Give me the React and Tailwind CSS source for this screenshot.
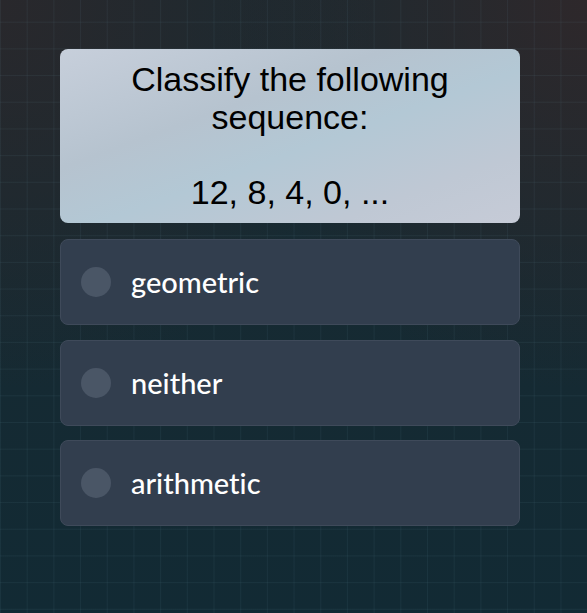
import React from 'react';

const options = ['geometric', 'neither', 'arithmetic'];

const App = () => {
  return (
    <div className="relative min-h-[613px] w-full overflow-hidden bg-[#162730]">
      {/* background tint */}
      <div className="absolute inset-0 bg-[radial-gradient(ellipse_at_0%_0%,#29282c_0%,rgba(41,40,44,0)_45%),radial-gradient(ellipse_at_100%_0%,#2e282b_0%,rgba(46,40,43,0)_45%),linear-gradient(to_bottom,#1a2a31,#122a34)]" />
      {/* grid lines */}
      <div className="absolute inset-0 bg-[linear-gradient(to_right,rgba(120,170,190,0.08)_1px,transparent_1px),linear-gradient(to_bottom,rgba(120,170,190,0.08)_1px,transparent_1px)] bg-[size:26.7px_26.7px] bg-[position:0px_-5px]" />

      <main className="relative ml-[60px] w-[460px] pt-[49px] flex flex-col">
        <div className="rounded-lg bg-[linear-gradient(160deg,#c7cfdb_0%,#b6c3cf_35%,#b3c8d5_55%,#bfc8d4_80%,#c6cbd7_100%)] px-4 py-3 text-center text-[34px] leading-[37.5px] text-black font-['Liberation_Sans',Arial,sans-serif]">
          Classify the following sequence:
          <br />
          <br />
          12, 8, 4, 0, ...
        </div>

        <div className="mt-4 flex flex-col gap-[14.5px]">
          {options.map((opt) => (
            <button
              key={opt}
              className="flex h-[86px] items-center gap-5 rounded-lg border border-[#3f4a5a] bg-[#323e4e] pl-5 text-left"
            >
              <span className="h-[30px] w-[30px] shrink-0 rounded-full bg-[#4a5666]"></span>
              <span className="text-[29px] font-medium text-white [font-variant-ligatures:none] font-['Lato','Noto_Sans',sans-serif]">{opt}</span>
            </button>
          ))}
        </div>
      </main>
    </div>
  );
};

export default App;
